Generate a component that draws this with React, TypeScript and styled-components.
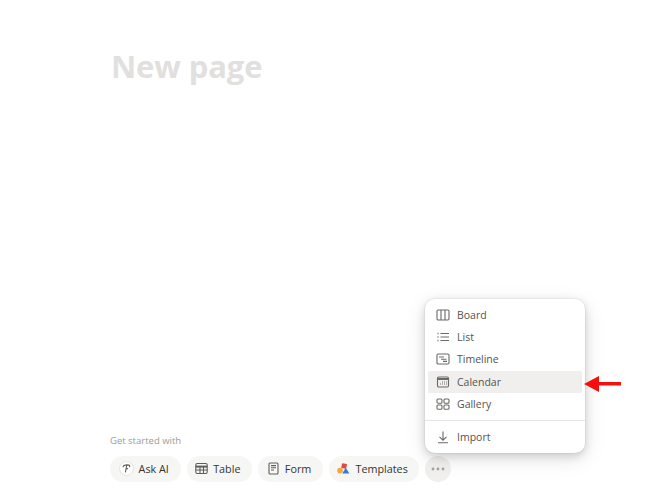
import React from 'react';
import styled, { createGlobalStyle } from 'styled-components';

const GlobalStyle = createGlobalStyle`
  html, body {
    margin: 0;
    padding: 0;
    background: #fff;
  }
  body {
    font-family: "Open Sans", "Noto Sans", "Liberation Sans", sans-serif;
  }
`;

const Page = styled.div`
  position: relative;
  width: 661px;
  height: 500px;
  overflow: hidden;
  display: flex;
  flex-direction: column;
  justify-content: space-between;
  box-sizing: border-box;
  padding: 45px 0 18px 110px;
`;

const Title = styled.h1`
  margin: 0 0 0 1px;
  font-size: 31px;
  line-height: 43px;
  font-weight: 700;
  letter-spacing: -0.1px;
  color: #e1e0de;
`;

const Starter = styled.div`
  display: flex;
  flex-direction: column;
  gap: 8px;
`;

const Hint = styled.div`
  font-size: 9.5px;
  line-height: 14px;
  color: #9b9a97;
`;

const Chips = styled.div`
  display: flex;
  gap: 6.3px;
`;

const Chip = styled.div<{ $w: number }>`
  display: flex;
  align-items: center;
  justify-content: center;
  gap: 5px;
  box-sizing: border-box;
  width: ${(p) => p.$w}px;
  height: 26px;
  padding: 0 3px 1px 0;
  border-radius: 13px;
  background: #f6f6f5;
  color: #37352f;
  font-size: 10.8px;
  font-weight: 500;
`;

const MoreChip = styled(Chip)`
  padding: 0;
  background: #f1f0ef;
`;

const Menu = styled.div`
  position: absolute;
  left: 425px;
  top: 299px;
  width: 160px;
  height: 154px;
  box-sizing: border-box;
  padding: 5px 3px;
  background: #fff;
  border-radius: 10px;
  box-shadow: 0 0 0 1px rgba(15, 15, 15, 0.04), 0 3px 10px rgba(15, 15, 15, 0.16),
    0 6px 22px rgba(15, 15, 15, 0.1);
`;

const MenuItem = styled.div<{ $active?: boolean }>`
  display: flex;
  align-items: center;
  gap: 7px;
  height: 22.3px;
  padding-left: 8px;
  padding-bottom: 1px;
  box-sizing: border-box;
  font-size: 10.5px;
  color: #55534e;
  background: ${(p) => (p.$active ? '#f0efed' : 'transparent')};
`;

const Divider = styled.div`
  height: 1px;
  margin: 5px -3px 5px;
  background: #e6e5e3;
`;

const Arrow = styled.svg`
  position: absolute;
  left: 584px;
  top: 375px;
`;

const Icon = styled.svg`
  flex: none;
  fill: none;
  stroke: #6b6a66;
  stroke-width: 1.1;
`;

const ChipIcon = styled(Icon)`
  stroke: #5f5e5a;
`;

const AiBadge = styled.span`
  display: flex;
  align-items: center;
  justify-content: center;
  width: 15px;
  height: 15px;
  border-radius: 50%;
  background: #fff;
  border: 1px solid #e4e3e1;
  box-sizing: border-box;
`;

const BoardIcon = () => (
  <Icon width="14" height="14" viewBox="0 0 14 14">
    <rect x="1" y="2" width="12" height="10" rx="1.2" />
    <path d="M5 2v10M9 2v10" />
  </Icon>
);

const ListIcon = () => (
  <Icon width="14" height="14" viewBox="0 0 14 14">
    <path d="M4.5 3.5H13M4.5 7H13M4.5 10.5H13" />
    <path d="M1.5 3.5h1M1.5 7h1M1.5 10.5h1" strokeWidth="1.4" />
  </Icon>
);

const TimelineIcon = () => (
  <Icon width="14" height="14" viewBox="0 0 14 14">
    <rect x="1" y="2" width="12" height="10" rx="1.2" />
    <path d="M3 5h5M5 7.2h5.5M7 9.4h4" />
  </Icon>
);

const CalendarIcon = () => (
  <Icon width="14" height="14" viewBox="0 0 14 14">
    <rect x="1.5" y="2" width="11" height="10" rx="1.2" />
    <path d="M1.5 4h11" strokeWidth="2" />
    <path d="M6 7h.9M8 7h.9M10 7h.9M4 9h.9M6 9h.9M8 9h.9M10 9h.9" />
  </Icon>
);

const GalleryIcon = () => (
  <Icon width="14" height="14" viewBox="0 0 14 14">
    <rect x="1" y="2" width="5" height="4.2" rx="1" />
    <rect x="8" y="2" width="5" height="4.2" rx="1" />
    <rect x="1" y="8" width="5" height="4.2" rx="1" />
    <rect x="8" y="8" width="5" height="4.2" rx="1" />
  </Icon>
);

const ImportIcon = () => (
  <Icon width="14" height="14" viewBox="0 0 14 14">
    <path d="M7 1.5v8.5M3.5 6.8 7 10.2l3.5-3.4M2 12.8h10" />
  </Icon>
);

const TableIcon = () => (
  <ChipIcon width="13" height="13" viewBox="0 0 13 13">
    <rect x="0.8" y="1.5" width="11.4" height="10" rx="1.4" />
    <path d="M0.8 4.6h11.4" strokeWidth="2" />
    <path d="M0.8 8h11.4M5 4v7.5M8.5 4v7.5" />
  </ChipIcon>
);

const FormIcon = () => (
  <ChipIcon width="13" height="13" viewBox="0 0 13 13">
    <rect x="2" y="1" width="9" height="11" rx="1" />
    <path d="M4 3.6h5M4 5.8h5M4 8h3" />
  </ChipIcon>
);

const TemplatesIcon = () => (
  <svg width="13" height="13" viewBox="0 0 13 13">
    <rect x="4.6" y="1.5" width="5" height="5" rx="0.6" fill="#e5483d" transform="rotate(12 7 4)" />
    <circle cx="3" cy="8.6" r="2.8" fill="#f2a93b" />
    <path d="M8.8 5.8 12.4 11.4H5.2Z" fill="#2f7fdc" />
  </svg>
);

const AiIcon = () => (
  <ChipIcon width="11" height="11" viewBox="0 0 11 11">
    <path d="M2.8 2.6c1.5-.8 3.8-.9 5.6-.5M5.8 2 4.4 9.4M1.8 4.2l1.2-1.8M8.4 2.2l.4 2M5.2 5.4l1.8.4" />
  </ChipIcon>
);

const menuItems = [
  { label: 'Board', icon: <BoardIcon /> },
  { label: 'List', icon: <ListIcon /> },
  { label: 'Timeline', icon: <TimelineIcon /> },
  { label: 'Calendar', icon: <CalendarIcon />, active: true },
  { label: 'Gallery', icon: <GalleryIcon /> },
];

function App() {
  return (
    <>
      <GlobalStyle />
      <Page>
        <Title>New page</Title>
        <Starter>
          <Hint>Get started with</Hint>
          <Chips>
            <Chip $w={70.5}>
              <AiBadge>
                <AiIcon />
              </AiBadge>
              Ask AI
            </Chip>
            <Chip $w={65}>
              <TableIcon />
              Table
            </Chip>
            <Chip $w={65}>
              <FormIcon />
              Form
            </Chip>
            <Chip $w={89.5}>
              <TemplatesIcon />
              Templates
            </Chip>
            <MoreChip $w={26}>
              <svg width="14" height="4" viewBox="0 0 14 4">
                <circle cx="2" cy="2" r="1.4" fill="#a5a4a1" />
                <circle cx="7" cy="2" r="1.4" fill="#a5a4a1" />
                <circle cx="12" cy="2" r="1.4" fill="#a5a4a1" />
              </svg>
            </MoreChip>
          </Chips>
        </Starter>

        <Menu>
          {menuItems.map((item) => (
            <MenuItem key={item.label} $active={item.active}>
              {item.icon}
              {item.label}
            </MenuItem>
          ))}
          <Divider />
          <MenuItem>
            <ImportIcon />
            Import
          </MenuItem>
        </Menu>

        <Arrow width="38" height="18" viewBox="0 0 38 18">
          <path d="M0 9 15 1v6h22v3.5H15V17Z" fill="#f50f0f" />
        </Arrow>
      </Page>
    </>
  );
}

export default App;
